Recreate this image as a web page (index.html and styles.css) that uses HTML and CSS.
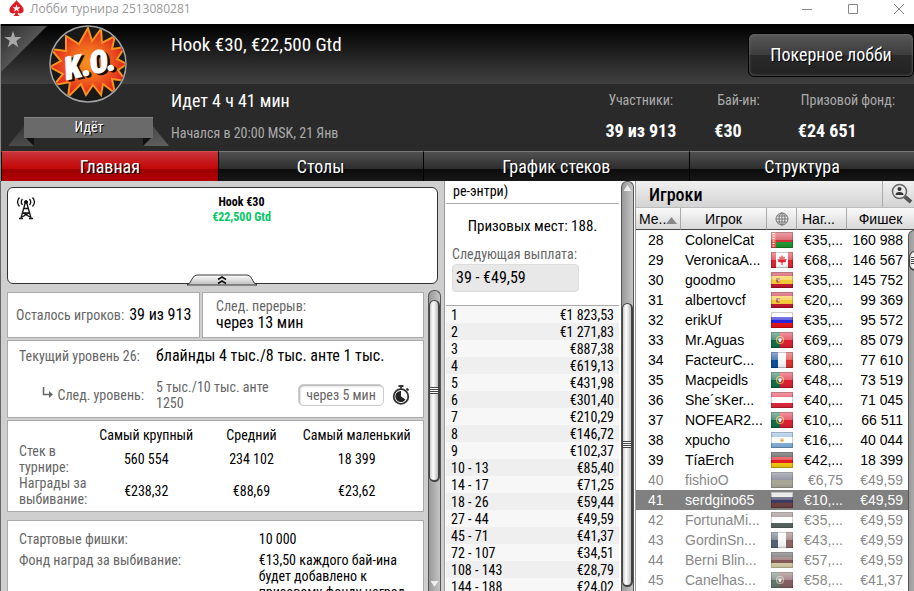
FILE: index.html
```
<!DOCTYPE html>
<html lang="ru">
<head>
  <meta charset="UTF-8">
  <meta name="viewport" content="width=device-width, initial-scale=1.0">
  <title>Лобби турнира 2513080281</title>
  <link rel="stylesheet" href="styles.css">
</head>
<body>
  <svg class="defs" aria-hidden="true">
    <defs>
      <linearGradient id="gloss" x1="0" y1="0" x2="0" y2="1">
        <stop offset="0" stop-color="#fff" stop-opacity=".55"/>
        <stop offset=".5" stop-color="#fff" stop-opacity=".3"/>
        <stop offset=".5" stop-color="#fff" stop-opacity="0"/>
        <stop offset="1" stop-color="#000" stop-opacity=".12"/>
      </linearGradient>
      <symbol id="shine" viewBox="0 0 22 16">
        <path d="M0 0h22v16H0z" fill="url(#gloss)"/>
        <path d="M.5 .5h21v15H.5z" fill="none" stroke="#000" stroke-opacity=".2"/>
      </symbol>
      <symbol id="by" viewBox="0 0 22 16">
        <path d="M0 0h22v10H0z" fill="#d0313a"/><path d="M0 10h22v6H0z" fill="#17962c"/>
        <path d="M0 0h5v16H0z" fill="#e8554f"/>
        <path d="M2.500 1v14" stroke="#fff" stroke-width="2" stroke-dasharray="1 1.500"/>
        <use href="#shine"/>
      </symbol>
      <symbol id="ca" viewBox="0 0 22 16">
        <path d="M0 0h22v16H0z" fill="#fff"/><path d="M0 0h5v16H0zM17 0h5v16h-5z" fill="#e0202c"/>
        <path d="M11 3l1.500 2 1.500-.5-.5 2.500 2.500 0-1.500 2 .5 1-3.500.6V13h-1v-2.400L7 10l.5-1L6 7h2.500L8 4.500l1.500.5z" fill="#e0202c"/>
        <use href="#shine"/>
      </symbol>
      <symbol id="es" viewBox="0 0 22 16">
        <path d="M0 0h22v16H0z" fill="#f5c832"/><path d="M0 0h22v4H0zM0 12h22v4H0z" fill="#c4122a"/>
        <path d="M5 6h4v4l-2 1-2-1z" fill="#b5633d"/><circle cx="8" cy="8.500" r="1" fill="#f0d9c0"/>
        <use href="#shine"/>
      </symbol>
      <symbol id="ru" viewBox="0 0 22 16">
        <path d="M0 0h22v6H0z" fill="#fff"/><path d="M0 5h22v6H0z" fill="#2420d8"/><path d="M0 11h22v5H0z" fill="#e80e12"/>
        <use href="#shine"/>
      </symbol>
      <symbol id="pt" viewBox="0 0 22 16">
        <path d="M0 0h22v16H0z" fill="#dc1c30"/><path d="M0 0h9v16H0z" fill="#0c6b42"/>
        <circle cx="9" cy="8" r="3.500" fill="none" stroke="#d3a04c" stroke-width="1.200"/>
        <path d="M7.500 6.500h3v2.500l-1.500 1.500-1.500-1.500z" fill="#eee"/>
        <use href="#shine"/>
      </symbol>
      <symbol id="fr" viewBox="0 0 22 16">
        <path d="M0 0h22v16H0z" fill="#f6f6f6"/><path d="M0 0h7v16H0z" fill="#0a4a9c"/><path d="M15 0h7v16h-7z" fill="#e02a2a"/>
        <use href="#shine"/>
      </symbol>
      <symbol id="at" viewBox="0 0 22 16">
        <path d="M0 0h22v16H0z" fill="#fff"/><path d="M0 0h22v5H0zM0 11h22v5H0z" fill="#de2236"/>
        <use href="#shine"/>
      </symbol>
      <symbol id="ar" viewBox="0 0 22 16">
        <path d="M0 0h22v16H0z" fill="#fff"/><path d="M0 0h22v5H0zM0 11h22v5H0z" fill="#7eb0de"/>
        <circle cx="11" cy="8" r="2" fill="#eeb060"/>
        <use href="#shine"/>
      </symbol>
      <symbol id="de" viewBox="0 0 22 16">
        <path d="M0 0h22v5H0z" fill="#222"/><path d="M0 5h22v6H0z" fill="#e41818"/><path d="M0 11h22v5H0z" fill="#f2c80a"/>
        <use href="#shine"/>
      </symbol>
      <symbol id="ua" viewBox="0 0 22 16">
        <path d="M0 0h22v8H0z" fill="#4a48a8"/><path d="M0 8h22v8H0z" fill="#a09a48"/>
        <use href="#shine"/>
      </symbol>
      <symbol id="hu" viewBox="0 0 22 16">
        <path d="M0 0h22v16H0z" fill="#fff"/><path d="M0 0h22v5H0z" fill="#b04850"/><path d="M0 11h22v5H0z" fill="#0e5238"/>
        <use href="#shine"/>
      </symbol>
    </defs>
  </svg>

  <div class="titlebar">
    <svg class="spade" width="15" height="17" viewBox="0 0 15 17" aria-hidden="true">
      <path d="M7.500 0C9 3 15 6 14.600 10.500c-.3 3-4 3.800-6 1.900.2 1.800.8 2.800 2.400 3.600H4c1.600-.8 2.200-1.800 2.400-3.600-2 1.900-5.700 1.100-6-1.900C0 6 6 3 7.500 0z" fill="#e01a22"/>
      <path d="M7.500 4.600l1 2.700h2.900L9.100 9l.9 2.700-2.500-1.600L5 11.700 5.900 9 3.600 7.300h2.900z" fill="#fff"/>
    </svg>
    <h1>Лобби турнира 2513080281</h1>
    <div class="window-buttons">
      <button type="button" aria-label="Свернуть"><svg width="10" height="10" viewBox="0 0 10 10"><path d="M0 5.500h10"/></svg></button>
      <button type="button" aria-label="Развернуть"><svg width="10" height="10" viewBox="0 0 10 10"><path d="M.5 .5h9v9h-9z"/></svg></button>
      <button type="button" aria-label="Закрыть"><svg width="10" height="10" viewBox="0 0 10 10"><path d="M0 0l10 10M10 0L0 10"/></svg></button>
    </div>
  </div>

  <header class="header">
    <div class="badge">
      <svg class="corner" width="46" height="46" viewBox="0 0 46 46" aria-hidden="true">
        <defs><linearGradient id="cg" x1="0" y1="0" x2="1" y2="1"><stop offset="0" stop-color="#2c2c2c"/><stop offset=".5" stop-color="#555"/></linearGradient></defs>
        <path d="M0 0h46L0 46z" fill="url(#cg)"/>
        <path d="M12 5l2 6h6.500l-5.200 4 2 6.200L12 17.500l-5.300 3.700 2-6.200L3.500 11H10z" fill="#a8a8a8"/>
      </svg>
      <svg class="logo" width="78" height="78" viewBox="0 0 78 78" role="img" aria-label="K.O.">
        <defs>
          <radialGradient id="fire"><stop offset="0" stop-color="#f8941c"/><stop offset=".45" stop-color="#f06a1c"/><stop offset="1" stop-color="#e01f20"/></radialGradient>
          <clipPath id="disc"><circle cx="39" cy="39" r="37"/></clipPath>
        </defs>
        <circle cx="39" cy="39" r="38" fill="#191919"/>
        <path d="M39 3L43 16L52 4L53 18L66 11L63 24L76 22L68 34L78 39L69 45L77 56L63 54L66 68L54 59L52 70L44 60L37 70L32 59L19 72L21 57L5 60L14 49L1 42L12 36L2 24L17 26L17 11L30 19z" clip-path="url(#disc)" fill="url(#fire)" stroke="#f5931e" stroke-width="2"/>
        <circle cx="39" cy="39" r="38" fill="none" stroke="#a2a2a2" stroke-width="1.500"/>
        <g transform="rotate(-12 39 39)" font-family="'Roboto Condensed', Roboto, sans-serif" font-weight="900" font-style="italic" font-size="31" stroke-width="1">
          <text x="17" y="52" fill="#160c08" stroke="#160c08">K.O.</text>
          <text x="15" y="50" fill="#fff" stroke="#fff">K.O.</text>
        </g>
      </svg>
      <div class="ribbon">
        <svg width="162" height="32" viewBox="0 0 162 32" aria-hidden="true">
          <defs><linearGradient id="tail" x1="0" y1="0" x2="1" y2="1"><stop offset="0" stop-color="#333"/><stop offset="1" stop-color="#606060"/></linearGradient></defs>
          <path d="M0 30L17 9h9v21zM161 30L144 9h-9v21z" fill="url(#tail)"/>
          <path d="M17 21h9v9zM144 21h-9v9z" fill="#111"/>
          <path d="M16 1h129v21H16z" fill="#6a6a6a"/>
          <path d="M16 1.500h129" stroke="#858585"/>
        </svg>
        <span>Идёт</span>
      </div>
    </div>
    <div class="about">
      <h2>Hook €30, €22,500 Gtd</h2>
      <p class="running">Идет 4 ч 41 мин</p>
      <p class="started">Начался в 20:00 MSK, 21 Янв</p>
    </div>
    <div class="summary">
      <button type="button" class="lobby">Покерное лобби</button>
      <dl>
        <div><dt>Участники:</dt><dd>39 из 913</dd></div>
        <div><dt>Бай-ин:</dt><dd>€30</dd></div>
        <div><dt>Призовой фонд:</dt><dd>€24 651</dd></div>
      </dl>
    </div>
  </header>

  <nav class="tabs">
    <a href="#main" class="active">Главная</a>
    <a href="#tables">Столы</a>
    <a href="#stacks">График стеков</a>
    <a href="#structure">Структура</a>
  </nav>

  <main class="content" id="main">
    <section class="info">
      <div class="promo">
        <svg class="antenna" width="20" height="24" viewBox="0 0 20 24" fill="none" stroke="#111" aria-hidden="true">
          <path d="M3.500 1.500q-4 4.500 0 9M6.500 3q-2.500 3 0 6M16.500 1.500q4 4.500 0 9M13.500 3q2.500 3 0 6" stroke-width="1.300"/>
          <circle cx="10" cy="6" r="1.500" fill="#111"/>
          <path d="M9.500 6L5 22M10.500 6L15 22M8 12.500h4M7 17h6M7 17l7 4M13 17l-7 4" stroke-width="1.300"/>
          <path d="M3 22.500h4M13 22.500h4" stroke-width="1.500"/>
        </svg>
        <p class="promo-name">Hook €30</p>
        <p class="promo-gtd">€22,500 Gtd</p>
        <button type="button" class="collapse" aria-label="Свернуть описание">
          <svg width="70" height="12" viewBox="0 0 70 12">
            <defs><linearGradient id="lip" x1="0" y1="0" x2="0" y2="1"><stop offset="0" stop-color="#fff"/><stop offset="1" stop-color="#bcbcbc"/></linearGradient></defs>
            <path d="M0 11Q3 10 5 5Q7 1 10 1H60Q63 1 65 5Q67 10 70 11z" fill="url(#lip)" stroke="#3a3a3a"/>
            <path d="M31 5.500l4-2.500 4 2.500M31 9.500L35 7l4 2.500" fill="none" stroke="#111" stroke-width="1.500"/>
          </svg>
        </button>
      </div>

      <div class="scroll-area">
        <div class="cards">
          <div class="card left-players"><span class="label">Осталось игроков:</span> <span class="big">39 из 913</span></div>
          <div class="card break"><span class="label">След. перерыв:</span><span class="big">через 13 мин</span></div>
          <div class="card level">
            <span class="label">Текущий уровень 26:</span>
            <span class="big blinds">блайнды 4 тыс./8 тыс. анте 1 тыс.</span>
            <span class="label next">
              <svg width="12" height="12" viewBox="0 0 12 12" aria-hidden="true"><path d="M1.500 0v7.500H8" fill="none" stroke="#666" stroke-width="1.500"/><path d="M7 4l4 3.500L7 11z" fill="#666"/></svg>
              След. уровень:
            </span>
            <span class="label next-blinds">5 тыс./10 тыс. анте 1250</span>
            <span class="timer">
              <span class="time">через 5 мин</span>
              <svg width="18" height="20" viewBox="0 0 18 20" aria-hidden="true">
                <circle cx="9" cy="11.500" r="7.300" fill="none" stroke="#333" stroke-width="1.800"/>
                <path d="M9 11.500V6a5.500 5.500 0 1 0 4.500 8.500z" fill="#222"/>
                <path d="M6.500 1h5M9 1v3M14.500 3.500l2 2" stroke="#333" stroke-width="1.800"/>
              </svg>
            </span>
          </div>
          <div class="card stacks">
            <table>
              <thead>
                <tr><td></td><th scope="col">Самый крупный</th><th scope="col">Средний</th><th scope="col">Самый маленький</th></tr>
              </thead>
              <tbody>
                <tr><th scope="row">Стек в турнире:</th><td>560 554</td><td>234 102</td><td>18 399</td></tr>
                <tr><th scope="row">Награды за выбивание:</th><td>€238,32</td><td>€88,69</td><td>€23,62</td></tr>
              </tbody>
            </table>
          </div>
          <div class="card details">
            <dl>
              <dt>Стартовые фишки:</dt><dd>10 000</dd>
              <dt>Фонд наград за выбивание:</dt><dd>€13,50 каждого бай-ина будет добавлено к призовому фонду наград</dd>
            </dl>
          </div>
        </div>
        <div class="scrollbar"><div class="thumb info-thumb"></div><div class="arrow-down"></div></div>
      </div>
    </section>

    <section class="prizes">
      <div class="prizes-body">
        <p class="reentry">ре-энтри)</p>
        <p class="places">Призовых мест: 188.</p>
        <p class="label">Следующая выплата:</p>
        <p class="next-prize">39 - €49,59</p>
        <table class="payouts">
          <tbody>
            <tr><td>1</td><td>€1 823,53</td></tr>
            <tr><td>2</td><td>€1 271,83</td></tr>
            <tr><td>3</td><td>€887,38</td></tr>
            <tr><td>4</td><td>€619,13</td></tr>
            <tr><td>5</td><td>€431,98</td></tr>
            <tr><td>6</td><td>€301,40</td></tr>
            <tr><td>7</td><td>€210,29</td></tr>
            <tr><td>8</td><td>€146,72</td></tr>
            <tr><td>9</td><td>€102,37</td></tr>
            <tr><td>10 - 13</td><td>€85,40</td></tr>
            <tr><td>14 - 17</td><td>€71,25</td></tr>
            <tr><td>18 - 26</td><td>€59,44</td></tr>
            <tr><td>27 - 44</td><td>€49,59</td></tr>
            <tr><td>45 - 71</td><td>€41,37</td></tr>
            <tr><td>72 - 107</td><td>€34,51</td></tr>
            <tr><td>108 - 143</td><td>€28,79</td></tr>
            <tr><td>144 - 188</td><td>€24,02</td></tr>
          </tbody>
        </table>
      </div>
      <div class="scrollbar"><div class="arrow-up"></div><div class="thumb prizes-thumb"></div></div>
    </section>

    <section class="players">
      <div class="players-head">
        <h2>Игроки</h2>
        <button type="button" aria-label="Найти игрока">
          <svg width="22" height="22" viewBox="0 0 22 22">
            <path d="M13 13l7 6" stroke="#555" stroke-width="4"/>
            <circle cx="8.500" cy="8.500" r="7" fill="#e8e8e8" stroke="#666" stroke-width="1.500"/>
            <circle cx="8.500" cy="6" r="2" fill="#333"/><path d="M4.500 12q0-3 4-3t4 3z" fill="#333"/>
          </svg>
        </button>
      </div>
      <div class="players-body">
        <table>
          <colgroup><col class="c-place"><col class="c-name"><col class="c-flag"><col class="c-bounty"><col></colgroup>
          <thead>
            <tr>
              <th scope="col" class="sorted">Ме..<svg width="11" height="7" viewBox="0 0 11 7" aria-hidden="true"><path d="M5.500 0L11 7H0z" fill="#888"/></svg></th>
              <th scope="col">Игрок</th>
              <th scope="col"><svg class="globe" width="14" height="14" viewBox="0 0 14 14" role="img" aria-label="Страна"><g fill="none" stroke="#777"><circle cx="7" cy="7" r="6"/><ellipse cx="7" cy="7" rx="3" ry="6"/><path d="M7 1v12M1 7h12M2 4h10M2 10h10"/></g></svg></th>
              <th scope="col">Наг...</th>
              <th scope="col">Фишек</th>
            </tr>
          </thead>
          <tbody>
            <tr><td>28</td><td>ColonelCat</td><td><svg class="flag"><use href="#by"/></svg></td><td>€35,...</td><td>160 988</td></tr>
            <tr><td>29</td><td>VeronicaA...</td><td><svg class="flag"><use href="#ca"/></svg></td><td>€68,...</td><td>146 567</td></tr>
            <tr><td>30</td><td>goodmo</td><td><svg class="flag"><use href="#es"/></svg></td><td>€35,...</td><td>145 752</td></tr>
            <tr><td>31</td><td>albertovcf</td><td><svg class="flag"><use href="#es"/></svg></td><td>€20,...</td><td>99 369</td></tr>
            <tr><td>32</td><td>erikUf</td><td><svg class="flag"><use href="#ru"/></svg></td><td>€35,...</td><td>95 572</td></tr>
            <tr><td>33</td><td>Mr.Aguas</td><td><svg class="flag"><use href="#pt"/></svg></td><td>€69,...</td><td>85 079</td></tr>
            <tr><td>34</td><td>FacteurC...</td><td><svg class="flag"><use href="#fr"/></svg></td><td>€80,...</td><td>77 610</td></tr>
            <tr><td>35</td><td>Macpeidls</td><td><svg class="flag"><use href="#pt"/></svg></td><td>€48,...</td><td>73 519</td></tr>
            <tr><td>36</td><td>She´sKer...</td><td><svg class="flag"><use href="#at"/></svg></td><td>€40,...</td><td>71 045</td></tr>
            <tr><td>37</td><td>NOFEAR2...</td><td><svg class="flag"><use href="#pt"/></svg></td><td>€10,...</td><td>66 511</td></tr>
            <tr><td>38</td><td>xpucho</td><td><svg class="flag"><use href="#ar"/></svg></td><td>€16,...</td><td>40 044</td></tr>
            <tr><td>39</td><td>TíaErch</td><td><svg class="flag"><use href="#de"/></svg></td><td>€42,...</td><td>18 399</td></tr>
            <tr class="out"><td>40</td><td>fishioO</td><td><svg class="flag"><use href="#ua"/></svg></td><td>€6,75</td><td>€49,59</td></tr>
            <tr class="out selected"><td>41</td><td>serdgino65</td><td><svg class="flag"><use href="#ru"/></svg></td><td>€10,...</td><td>€49,59</td></tr>
            <tr class="out"><td>42</td><td>FortunaMi...</td><td><svg class="flag"><use href="#hu"/></svg></td><td>€35,...</td><td>€49,59</td></tr>
            <tr class="out"><td>43</td><td>GordinSn...</td><td><svg class="flag"><use href="#fr"/></svg></td><td>€43,...</td><td>€49,59</td></tr>
            <tr class="out"><td>44</td><td>Berni Blin...</td><td><svg class="flag"><use href="#de"/></svg></td><td>€57,...</td><td>€49,59</td></tr>
            <tr class="out"><td>45</td><td>Canelhas...</td><td><svg class="flag"><use href="#pt"/></svg></td><td>€58,...</td><td>€41,37</td></tr>
          </tbody>
        </table>
        <div class="scrollbar"><div class="thumb players-thumb"></div></div>
      </div>
    </section>
  </main>
</body>
</html>
```
FILE: styles.css
```
* {
  box-sizing: border-box;
}
body {
  margin: 0;
  height: 100vh;
  display: flex;
  flex-direction: column;
  overflow: hidden;
  background: #cfcfcf;
  color: #000;
  font: 14px/16px "Roboto Condensed", "Liberation Sans Narrow", Roboto, sans-serif;
}
h1, h2, p, dl, dd {
  margin: 0;
}
button {
  padding: 0;
  border: 0;
  background: none;
  font: inherit;
}
svg {
  display: block;
}
table {
  width: 100%;
  border-collapse: separate;
  border-spacing: 0;
  table-layout: fixed;
}
th, td {
  padding: 0;
  font-weight: normal;
}
.defs {
  position: absolute;
  width: 0;
  height: 0;
}

/* window title */
.titlebar {
  display: flex;
  align-items: center;
  flex: none;
  height: 24px;
  padding: 0 10px 7px 9px;
  background: #fff;
}
.titlebar h1 {
  margin-left: 6px;
  color: #999;
  font: 12px/16px "Open Sans", sans-serif;
}
.window-buttons {
  display: flex;
  gap: 36px;
  margin-left: auto;
}
.window-buttons path {
  fill: none;
  stroke: #888;
}

/* header */
.header {
  display: flex;
  flex: none;
  height: 127px;
  border-left: 1px solid #888;
  background: linear-gradient(#000, #414141 60px, #2a2a2a 60px);
  color: #fff;
}
.badge {
  position: relative;
  width: 170px;
}
.corner {
  position: absolute;
  top: 2px;
  left: 0;
}
.logo {
  margin: 1px 0 0 48px;
  position: relative;
}
.ribbon {
  display: grid;
  margin: 13px 0 0 7px;
}
.ribbon > * {
  grid-area: 1 / 1;
}
.ribbon span {
  width: 162px;
  padding-top: 3px;
  text-align: center;
  text-shadow: 1px 1px #000;
  position: relative;
}
.about h2 {
  margin-top: 10px;
  font-size: 19px;
  line-height: 22px;
  font-weight: normal;
}
.running {
  margin-top: 34px;
  font-size: 18px;
  line-height: 22px;
}
.started {
  margin-top: 13px;
  color: #aaa;
}
.summary {
  display: flex;
  flex-direction: column;
  margin-left: auto;
}
.lobby {
  align-self: flex-end;
  width: 166px;
  height: 44px;
  margin-top: 9px;
  border: 1px solid #000;
  border-radius: 6px;
  background: linear-gradient(#585858, #3c3c3c 50%, #2a2a2a 50%, #222);
  box-shadow: inset 0 0 3px #777;
  color: #fff;
  font-size: 18px;
  text-shadow: 1px 1px #000;
}
.summary dl {
  display: flex;
  gap: 38px;
  padding: 15px 19px 0 0;
}
.summary dt {
  padding-left: 3px;
  color: #aaa;
}
.summary dd {
  margin-top: 12px;
  font-size: 18px;
  line-height: 22px;
  font-weight: bold;
}

/* tabs */
.tabs {
  display: grid;
  grid-template-columns: 217fr 205fr 267fr 225fr;
  flex: none;
  height: 30px;
  border-left: 1px solid #888;
}
.tabs a {
  border-left: 1px solid #000;
  border-top: 1px solid #777;
  background: linear-gradient(#505050, #2c2c2c 60%, #0c0c0c 60%, #181818);
  color: #fff;
  font-size: 18px;
  line-height: 29px;
  text-align: center;
  text-decoration: none;
  text-shadow: 1px 1px #000;
}
.tabs .active {
  border-top-color: #d05050;
  background: linear-gradient(#c8343a, #c40404 60%, #9c0000 60%, #b40000);
}

.content {
  display: grid;
  grid-template-columns: minmax(0, 445fr) minmax(0, 191fr) minmax(0, 278fr);
  grid-template-rows: minmax(0, 1fr);
  flex: 1;
  min-height: 0;
}
.label {
  color: #666;
}

/* shared scrollbar */
.scrollbar {
  flex: none;
  width: 13px;
  border: 1px solid #555;
  border-bottom: 0;
  border-radius: 6px 6px 0 0;
  background: linear-gradient(90deg, #999, #c4c4c4);
}
.thumb {
  border: 1px solid #444;
  border-width: 1px 2px 2px 1px;
  border-radius: 6px;
  background:
    repeating-linear-gradient(#444 0 1px, #fff 1px 2px) center / 8px 7px no-repeat,
    linear-gradient(90deg, #ccc, #fff 40%, #bbb);
}
.arrow-up, .arrow-down {
  width: 8px;
  height: 6px;
  margin: 3px auto 0;
  background: #eee;
  clip-path: polygon(50% 0, 100% 100%, 0 100%);
}
.arrow-down {
  margin: auto auto 4px;
  clip-path: polygon(0 0, 100% 0, 50% 100%);
}

/* left column */
.info {
  display: flex;
  flex-direction: column;
  gap: 6px;
  padding: 6px 3px 0 6px;
  border-left: 1px solid #666;
  border-right: 1px solid #999;
}
.promo {
  position: relative;
  flex: none;
  height: 97px;
  margin-right: 3px;
  padding: 7px 0 0 38px;
  border: 1px solid #333;
  border-radius: 6px;
  background: #fff;
  font-size: 12px;
  line-height: 15px;
  font-weight: bold;
  text-align: center;
}
.promo-gtd {
  color: #00c864;
}
.antenna {
  position: absolute;
  top: 8px;
  left: 8px;
}
.collapse {
  position: absolute;
  left: 179px;
  bottom: -3px;
}
.scroll-area {
  display: flex;
  flex: 1;
  gap: 4px;
  min-height: 0;
}
.scroll-area .scrollbar {
  display: flex;
  flex-direction: column;
}
.cards {
  display: grid;
  grid-template-columns: 193fr 222fr;
  grid-auto-rows: max-content;
  gap: 2px;
  flex: 1;
  padding-top: 2px;
  overflow: hidden;
}
.card {
  border: 1px solid #aaa;
  background: #fff;
}
.big {
  font-size: 16px;
  line-height: 18px;
}
.left-players {
  display: flex;
  align-items: center;
  gap: 5px;
  height: 46px;
  padding-left: 8px;
  white-space: nowrap;
}
.break {
  display: flex;
  flex-direction: column;
  justify-content: center;
  padding-left: 13px;
}
.level {
  grid-column: span 2;
  display: grid;
  grid-template-columns: 125px 130px 1fr;
  column-gap: 12px;
  row-gap: 14px;
  align-items: center;
  height: 78px;
  padding: 6px 17px 5px 11px;
  align-content: start;
  white-space: nowrap;
}
.blinds {
  grid-column: span 2;
}
.next {
  display: flex;
  justify-content: flex-end;
  gap: 3px;
}
.next-blinds {
  white-space: normal;
}
.timer {
  display: flex;
  align-items: center;
  justify-content: flex-end;
  gap: 8px;
}
.time {
  width: 86px;
  padding: 2px 0;
  border: 1px solid #ccc;
  border-radius: 5px;
  box-shadow: inset 1px 1px 2px #aaa;
  color: #666;
  text-align: center;
}
.stacks {
  grid-column: span 2;
  height: 92px;
  padding: 6px 11px 0;
}
.stacks th, .stacks td {
  height: 32px;
  text-align: center;
  white-space: nowrap;
}
.stacks thead th, .stacks thead td {
  height: 16px;
}
.stacks thead td {
  width: 72px;
}
.stacks thead th:nth-child(3) {
  width: 100px;
}
.stacks tbody th {
  color: #666;
  text-align: left;
  white-space: normal;
}
.details {
  grid-column: span 2;
  margin-top: 6px;
  padding: 10px 11px 0;
}
.details dl {
  display: grid;
  grid-template-columns: 61fr 39fr;
  row-gap: 5px;
}
.details dt {
  color: #666;
}

/* prizes */
.prizes {
  display: flex;
  gap: 2px;
  padding-right: 1px;
  border-right: 1px solid #999;
  background: #fff;
}
.prizes-body {
  flex: 1;
  overflow: hidden;
  padding-left: 1px;
}
.reentry {
  padding: 2px 7px 4px;
  border-bottom: 1px solid #aaa;
}
.places {
  margin: 13px 0 11px;
  font-size: 15px;
  line-height: 18px;
  text-align: center;
}
.prizes-body .label {
  padding-left: 6px;
}
.next-prize {
  width: 127px;
  margin: 2px 0 13px 6px;
  padding: 4px 3px;
  border: 1px solid #ddd;
  border-radius: 4px;
  background: #e8e8e8;
  font-size: 16px;
  line-height: 18px;
}
.payouts {
  border-top: 1px solid #aaa;
}
.payouts td {
  height: 17px;
  padding: 0 5px;
}
.payouts td + td {
  text-align: right;
}
.payouts tr {
  background: #f7f7f7;
}
.payouts tr:nth-child(even) {
  background: #efefef;
}

/* players */
.players {
  display: flex;
  flex-direction: column;
  min-width: 0;
  background: #fff;
  font: 14px/20px "Liberation Sans", Arial, sans-serif;
}
.players-head {
  display: flex;
  flex: none;
  height: 27px;
  border-bottom: 1px solid #bbb;
  background: linear-gradient(#f0f0f0, #d4d4d4);
}
.players-head h2 {
  flex: 1;
  padding-left: 13px;
  font: 500 18px/28px "Roboto Condensed", "Liberation Sans Narrow", Roboto, sans-serif;
}
.players-head button {
  padding: 0 1px 0 8px;
  border-left: 1px solid #aaa;
}
.players-body {
  display: flex;
  flex: 1;
  min-height: 0;
  position: relative;
}
.players table {
  align-self: flex-start;
}
.c-place {
  width: 45px;
}
.c-name {
  width: 86px;
}
.c-flag {
  width: 30px;
}
.c-bounty {
  width: 50px;
}
.players th {
  height: 22px;
  border-right: 1px solid #aaa;
  border-bottom: 1px solid #444;
  background: linear-gradient(#fafafa, #d8d8d8);
}
.players th:last-child {
  border-right: 0;
}
.players th:nth-child(4) {
  padding-left: 5px;
  text-align: left;
}
.players .sorted {
  padding-left: 3px;
  text-align: left;
  white-space: nowrap;
}
.sorted svg {
  display: inline-block;
}
.globe {
  margin: auto;
}
.players td {
  height: 20px;
  overflow: hidden;
  white-space: nowrap;
}
.players td:first-child {
  padding-left: 12px;
}
.players td:nth-child(2) {
  padding-left: 4px;
}
.players td:nth-child(3) {
  padding-left: 4px;
}
.players td:nth-child(4) {
  padding-right: 4px;
  text-align: right;
}
.players td:last-child {
  padding-right: 11px;
  text-align: right;
}
.players tbody {
  line-height: 18px;
}
.flag {
  width: 22px;
  height: 16px;
}
.out {
  color: #888;
}
.out .flag {
  filter: saturate(.25);
  opacity: .85;
}
.players .selected {
  background: #808080;
  color: #fff;
}
.players .scrollbar {
  position: absolute;
  top: 22px;
  right: -8px;
  bottom: 0;
  width: 14px;
}
.info-thumb {
  height: 182px;
  margin-top: 9px;
}
.prizes-thumb {
  height: 284px;
  margin-top: 112px;
}
.players-thumb {
  height: 20px;
  margin-top: 20px;
}
```
